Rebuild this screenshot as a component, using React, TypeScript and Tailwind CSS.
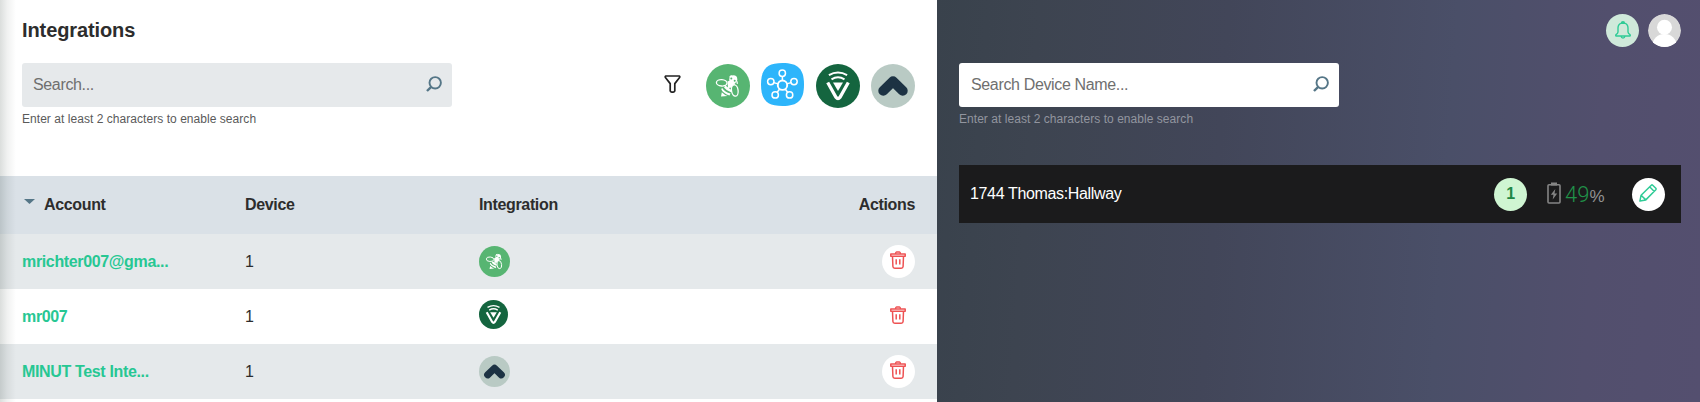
import React from "react";

type IconProps = { className?: string };

function Bee({ className }: IconProps) {
  return (
    <svg className={className} viewBox="0 0 44 44" fill="none">
      <circle cx="22" cy="22" r="22" fill="#57b572" />
      <circle cx="27.300" cy="15.300" r="4" fill="#fff" />
      <path d="M21.500 17.500L25 16l4.500 4-3 3.500L22 24Z" fill="#fff" />
      <path d="M19.500 21.500l5.500 4.200v2.600Q20 26.500 18 23.600ZM16 23.800Q19 28.500 24.500 29.500L23.500 31.500Q17.500 29.500 15.300 25.500ZM15.800 28.300Q18.500 31 21.500 32L15 32.500Z" fill="#fff" />
      <ellipse cx="15.700" cy="18.800" rx="5.300" ry="3.200" transform="rotate(4 15.700 18.800)" fill="#57b572" stroke="#fff" strokeWidth="1.300" />
      <ellipse cx="28.800" cy="26.500" rx="3.300" ry="5.700" transform="rotate(-8 28.800 26.500)" fill="#57b572" stroke="#fff" strokeWidth="1.300" />
      <path d="M24 12.800l1.300-1M31 17.500l.3 1.800" stroke="#fff" strokeWidth="1.200" strokeLinecap="round" />
      <circle cx="25.300" cy="14.500" r="1" fill="#57b572" />
      <circle cx="28.700" cy="16.700" r="1" fill="#57b572" />
    </svg>
  );
}

function Hub({ className }: IconProps) {
  return (
    <svg className={className} viewBox="0 0 43 43" fill="none">
      <path d="M21.500 0C37 0 43 6 43 21.500S37 43 21.500 43 0 37 0 21.500 6 0 21.500 0Z" fill="#2db5fb" />
      <g stroke="#fff" strokeWidth="1.500">
        <circle cx="21.500" cy="22.200" r="4.700" strokeWidth="1.900" />
        <circle cx="21.300" cy="10.200" r="3.200" />
        <circle cx="9.800" cy="18.600" r="3.200" />
        <circle cx="33" cy="18.600" r="3.200" />
        <circle cx="14.200" cy="31.900" r="3.200" />
        <circle cx="28.600" cy="31.900" r="3.200" />
        <path d="M21.400 13.400v4.100M12.900 19.600l4 1.300M29.900 19.600l-4 1.300M16.200 29.300l2.300-3.100M26.600 29.300l-2.200-3.100" />
      </g>
    </svg>
  );
}

function Vee({ className }: IconProps) {
  return (
    <svg className={className} viewBox="0 0 44 44" fill="none">
      <circle cx="22" cy="22" r="22" fill="#14653f" />
      <path d="M12.900 11.200Q22 6 31.100 11.200M15.500 15.300Q22 11.300 28.500 15.300" stroke="#fff" strokeWidth="2" />
      <path d="M11.700 18.500L20 33.300Q22 36 24 33.300L32.300 18.500" stroke="#fff" strokeWidth="3.300" />
      <path d="M17 18.500h10L22 27Z" fill="#fff" />
    </svg>
  );
}

function Chevron({ className }: IconProps) {
  return (
    <svg className={className} viewBox="0 0 44 44" fill="none">
      <circle cx="22" cy="22" r="22" fill="#b9cac4" />
      <path d="M12.300 26.800L22 17.300l9.700 9.500" stroke="#1c3243" strokeWidth="10" strokeLinecap="round" strokeLinejoin="round" />
    </svg>
  );
}

function SearchIcon({ className }: IconProps) {
  return (
    <svg className={className} viewBox="0 0 16 16" fill="none" stroke="#557687">
      <circle cx="9.200" cy="6.800" r="5.700" strokeWidth="1.900" />
      <path d="M5.200 10.800L1 15" strokeWidth="2.400" />
    </svg>
  );
}

function Trash({ className }: IconProps) {
  return (
    <svg className={className} viewBox="0 0 16 18" fill="none" stroke="#ee5253" strokeWidth="1.500" strokeLinejoin="round">
      <path d="M.8 2.900h14.400v2.400H.8ZM5.500 2.900q.2-2 1-2h3q.8 0 1 2M2.500 5.300l.4 10.200q.1 1.700 1.900 1.700h6.400q1.800 0 1.900-1.700l.4-10.200M6.200 8.300v5.200M9.800 8.300v5.200" />
    </svg>
  );
}

function SearchBox({ label, box, hint }: { label: string; box: string; hint: string }) {
  return (
    <div>
      <div className={`flex h-11 items-center rounded-[3px] pr-[10px] text-[#6f6f6f] ${box}`}>
        <span className="grow">{label}</span>
        <SearchIcon className="mb-0.5 size-4" />
      </div>
      <p className={`mt-[3px] text-[12px] leading-[18px] tracking-[0.045px] ${hint}`}>Enter at least 2 characters to enable search</p>
    </div>
  );
}

const rows = [
  { name: "mrichter007@gma...", Icon: Bee, icon: "size-[31px]", shade: "bg-[#e5e9eb]" },
  { name: "mr007", Icon: Vee, icon: "size-[29px] -mt-1", shade: "bg-white" },
  { name: "MINUT Test Inte...", Icon: Chevron, icon: "size-[31px]", shade: "bg-[#e5e9eb]" },
];

const grid = "grid grid-cols-[223px_234px_1fr_auto] items-center pl-[22px] pr-[22px]";

export default function App() {
  return (
    <div className="flex h-[402px] w-[1700px] overflow-hidden font-['Liberation_Sans',Arial,sans-serif] text-[16px] tracking-[-0.35px] text-[#2d2d2d]">
      <main className="relative w-[937px] shrink-0 bg-white">
        <header className="h-[176px] px-[22px] pt-[18px]">
          <h1 className="text-[20px] leading-6 font-bold tracking-[-0.1px]">Integrations</h1>
          <div className="mt-[21px] flex justify-between">
            <SearchBox label="Search..." box="w-[430px] bg-[#e6e9eb] pl-[11px]" hint="text-[#5a5a5a]" />
            <div className="flex items-start">
              <svg className="mt-3 mr-[25px] h-[18px] w-[17px]" viewBox="0 0 17 18" fill="none" stroke="#222" strokeWidth="1.700" strokeLinejoin="round">
                <path d="M1.600 1h13.800q.8.8 0 1.800L10.800 8.600v7.200q-.6 1.400-2.300 1.400t-2.300-1.400V8.600L1.600 2.800Q.8 1.800 1.600 1Z" />
              </svg>
              <Bee className="mt-px mr-[11px] size-11" />
              <Hub className="mr-3 size-[43px]" />
              <Vee className="mt-px mr-[11px] size-11" />
              <Chevron className="mt-px size-11" />
            </div>
          </div>
        </header>
        <section>
          <div className={`${grid} h-[58px] bg-[#dae1e7] font-bold`}>
            <span className="flex items-center gap-[9px]">
              <svg className="mb-2 ml-0.5 h-[5px] w-[11px]" viewBox="0 0 11 5"><path d="M0 0h11L5.500 5Z" fill="#557687" /></svg>
              Account
            </span>
            <span>Device</span>
            <span>Integration</span>
            <span>Actions</span>
          </div>
          {rows.map(({ name, Icon, icon, shade }) => (
            <div key={name} className={`${grid} h-[55px] ${shade}`}>
              <span className="font-bold text-[#27c793]">{name}</span>
              <span>1</span>
              <Icon className={icon} />
              <span className="flex size-[33px] items-center justify-center rounded-full bg-white">
                <Trash className="mr-px mb-[3px] h-[18px] w-4" />
              </span>
            </div>
          ))}
        </section>
        <div className="pointer-events-none absolute inset-y-0 left-0 w-4 bg-[linear-gradient(90deg,rgba(0,20,10,0.14),rgba(0,20,10,0.06)_45%,transparent)]" />
      </main>
      <aside className="w-[763px] bg-[linear-gradient(94deg,#39424c_0%,#3d4450_13%,#424659_37%,#4a4f68_66%,#524f6d_85%,#544f6f_100%)] pr-[19px] pl-[22px]">
        <div className="flex h-[63px] items-start justify-end gap-[9px] pt-[14px]">
          <span className="flex size-[33px] items-center justify-center rounded-full bg-[#cfe9da]">
            <svg className="mb-0.5 ml-px h-[18px] w-4" viewBox="0 0 16 18" fill="none" stroke="#2fcb96" strokeWidth="1.400" strokeLinecap="round" strokeLinejoin="round">
              <path d="M6.500 2.200q0-1.500 1.500-1.500t1.500 1.500C12 3 13 5 13 7v4q.2 1.500 1.700 2.300.9.600.4 1.700H.9q-.5-1.100.4-1.700Q2.800 12.500 3 11V7c0-2 1-4 3.500-4.800M6.500 2.200h3M6 15.200q.4 1.900 2 1.900t2-1.900" />
            </svg>
          </span>
          <svg className="size-[33px] rounded-full" viewBox="0 0 33 33">
            <circle cx="16.500" cy="16.500" r="16.500" fill="#d8d8d8" />
            <circle cx="16.500" cy="13.300" r="7.500" fill="#fff" />
            <ellipse cx="16.500" cy="31" rx="12" ry="11" fill="#fff" />
          </svg>
        </div>
        <div className="w-[380px]">
          <SearchBox label="Search Device Name..." box="bg-white pl-3" hint="text-[#92959f]" />
        </div>
        <div className="mt-[37px] flex h-[58px] items-center bg-[#1b1b1c] pr-4 pl-[11px] text-white">
          <span className="grow">1744 Thomas:Hallway</span>
          <span className="flex size-[33px] items-center justify-center rounded-full bg-[#cff5d2] font-bold text-[#208746]">1</span>
          <svg className="mb-0.5 ml-5 h-[22px] w-[14px] shrink-0" viewBox="0 0 14 22" fill="none" stroke="#858585" strokeWidth="1.600">
            <rect x="1" y="2.800" width="12" height="18.200" rx="1" />
            <path d="M4.800 1.200h4.400v1.600H4.800Z" fill="#858585" />
            <path d="M8.300 7L3.800 12.800h2.700L5.700 17.500l4.500-6H7.500Z" fill="#858585" stroke="none" />
          </svg>
          <span className="ml-1 flex w-[42px] items-baseline tracking-normal text-[#209249]">
            <span className="font-[Roboto] text-[22px] font-light">49</span>
            <span className="text-[17px] text-[#929292]">%</span>
          </span>
          <span className="ml-[25px] flex size-[33px] shrink-0 items-center justify-center rounded-full bg-white">
            <svg className="mr-px mb-0.5 size-[18px]" viewBox="0 0 18 18" fill="none" stroke="#2fcb96" strokeWidth="1.500" strokeLinejoin="round">
              <path d="M.9 17.100l1.200-5.900L12.300 1.200q.7-.6 1.400 0l3.100 3.100q.6.700 0 1.400L6.800 15.900ZM2.100 11.200l4.700 4.700M10.600 2.800l4.700 4.700" />
            </svg>
          </span>
        </div>
      </aside>
    </div>
  );
}
